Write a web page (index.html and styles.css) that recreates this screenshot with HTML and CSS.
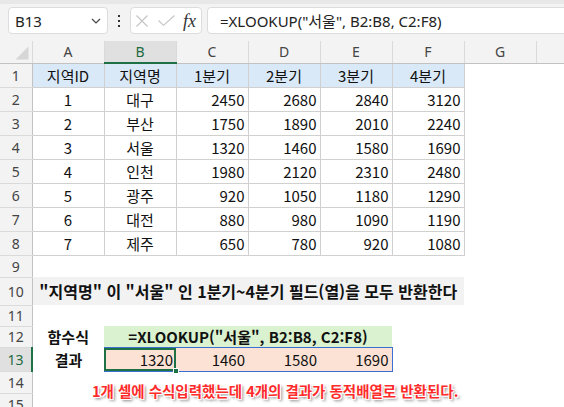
FILE: index.html
```html
<!DOCTYPE html>
<html lang="ko">
<head>
    <meta charset="UTF-8">
    <title>XLOOKUP 동적배열</title>
    <link rel="stylesheet" href="styles.css">
</head>
<body>
    <div class="toolbar">
        <div class="namebox">
            <span>B13</span>
            <svg width="10" height="6" viewBox="0 0 10 6"><path d="M1 1 L5 5 L9 1" fill="none" stroke="#444" stroke-width="1.2"/></svg>
        </div>
        <div class="dots"><i></i><i></i><i></i></div>
        <div class="fxbox">
            <svg class="ic-x" width="12" height="12" viewBox="0 0 12 12"><path d="M0.5 0.5 L11.5 11.5 M11.5 0.5 L0.5 11.5" stroke="#c4c4c4" stroke-width="1.1"/></svg>
            <svg class="ic-ok" width="17" height="11" viewBox="0 0 17 11"><path d="M0.5 5.5 L5.5 10.3 L16.5 0.5" fill="none" stroke="#c4c4c4" stroke-width="1.1"/></svg>
            <span class="fx">fx</span>
        </div>
        <div class="formula">=XLOOKUP("서울", B2:B8, C2:F8)</div>
    </div>

    <table class="sheet">
        <colgroup>
            <col class="col-rh">
            <col class="col"><col class="col"><col class="col"><col class="col"><col class="col"><col class="col"><col class="col">
            <col class="col-rest">
        </colgroup>
        <thead>
            <tr class="r-head">
                <th class="corner"><span class="tri"></span></th>
                <th>A</th><th class="cur">B</th><th>C</th><th>D</th><th>E</th><th>F</th><th>G</th><th></th>
            </tr>
        </thead>
        <tbody>
            <tr class="r24">
                <th>1</th>
                <td class="t hd">지역ID</td><td class="t hd">지역명</td><td class="t hd">1분기</td><td class="t hd">2분기</td><td class="t hd">3분기</td><td class="t hd">4분기</td><td></td><td></td>
            </tr>
            <tr class="r24">
                <th>2</th>
                <td class="t c">1</td><td class="t c">대구</td><td class="t n">2450</td><td class="t n">2680</td><td class="t n">2840</td><td class="t n">3120</td><td></td><td></td>
            </tr>
            <tr class="r24">
                <th>3</th>
                <td class="t c">2</td><td class="t c">부산</td><td class="t n">1750</td><td class="t n">1890</td><td class="t n">2010</td><td class="t n">2240</td><td></td><td></td>
            </tr>
            <tr class="r24">
                <th>4</th>
                <td class="t c">3</td><td class="t c">서울</td><td class="t n">1320</td><td class="t n">1460</td><td class="t n">1580</td><td class="t n">1690</td><td></td><td></td>
            </tr>
            <tr class="r24">
                <th>5</th>
                <td class="t c">4</td><td class="t c">인천</td><td class="t n">1980</td><td class="t n">2120</td><td class="t n">2310</td><td class="t n">2480</td><td></td><td></td>
            </tr>
            <tr class="r24">
                <th>6</th>
                <td class="t c">5</td><td class="t c">광주</td><td class="t n">920</td><td class="t n">1050</td><td class="t n">1180</td><td class="t n">1290</td><td></td><td></td>
            </tr>
            <tr class="r24">
                <th>7</th>
                <td class="t c">6</td><td class="t c">대전</td><td class="t n">880</td><td class="t n">980</td><td class="t n">1090</td><td class="t n">1190</td><td></td><td></td>
            </tr>
            <tr class="r24">
                <th>8</th>
                <td class="t c">7</td><td class="t c">제주</td><td class="t n">650</td><td class="t n">780</td><td class="t n">920</td><td class="t n">1080</td><td></td><td></td>
            </tr>
            <tr class="r9">
                <th>9</th>
                <td colspan="8"></td>
            </tr>
            <tr class="r10">
                <th>10</th>
                <td colspan="6" class="desc">"지역명" 이 "서울" 인 1분기~4분기 필드(열)을 모두 반환한다</td><td></td><td></td>
            </tr>
            <tr class="r11">
                <th>11</th>
                <td colspan="8"></td>
            </tr>
            <tr class="r12">
                <th>12</th>
                <td class="lbl">함수식</td><td colspan="4" class="fml">=XLOOKUP("서울", B2:B8, C2:F8)</td><td></td><td></td><td></td>
            </tr>
            <tr class="r13">
                <th class="cur">13</th>
                <td class="lbl">결과</td><td class="res sel">1320<span class="handle"></span></td><td class="res">1460</td><td class="res">1580</td><td class="res end">1690</td><td></td><td></td><td></td>
            </tr>
            <tr class="r14">
                <th>14</th>
                <td colspan="8"></td>
            </tr>
            <tr class="r15">
                <th>15</th>
                <td colspan="8"></td>
            </tr>
        </tbody>
    </table>

    <div class="note">1개 셀에 수식입력했는데 4개의 결과가 동적배열로 반환된다.</div>
</body>
</html>
```

FILE: styles.css
```css
* {
    box-sizing: border-box;
}
body {
    margin: 0;
    width: 564px;
    height: 407px;
    overflow: hidden;
    position: relative;
    background: #fff;
    color: #222;
    font-family: "Noto Sans CJK KR", "Noto Sans", sans-serif;
}

/* formula bar */
.toolbar {
    display: flex;
    align-items: flex-start;
    height: 41px;
    padding: 3px 0 0 8px;
    background: #f3f3f3;
    border-top: 4px solid #e8e8e8;
    overflow: hidden;
}
.namebox {
    flex: 0 0 100px;
    height: 27px;
    display: flex;
    align-items: center;
    justify-content: space-between;
    padding: 0 6px 0 6px;
    background: #fff;
    border: 1px solid #dcdcdc;
    border-radius: 4px;
    font-family: "Noto Sans", sans-serif;
    font-size: 15px;
}
.dots {
    flex: 0 0 22px;
    height: 27px;
    display: flex;
    flex-direction: column;
    align-items: center;
    justify-content: center;
    gap: 3px;
}
.dots i {
    width: 2px;
    height: 2px;
    background: #333;
}
.fxbox {
    flex: 0 0 72px;
    height: 27px;
    display: flex;
    align-items: center;
    padding-left: 5px;
    background: #fff;
    border: 1px solid #dcdcdc;
    border-radius: 4px;
}
.ic-ok {
    margin-left: 10px;
}
.fx {
    margin-left: 8px;
    font-family: "Liberation Serif", serif;
    font-style: italic;
    font-size: 18px;
    color: #333;
    line-height: 1;
}
.formula {
    flex: 0 0 400px;
    height: 27px;
    margin-left: 5px;
    padding-left: 12px;
    display: flex;
    align-items: center;
    background: #fff;
    border: 1px solid #dcdcdc;
    border-radius: 4px;
    font-family: "Noto Sans", "Noto Sans CJK KR", sans-serif;
    font-size: 15px;
    white-space: nowrap;
}

/* grid */
.sheet {
    border-collapse: collapse;
    table-layout: fixed;
    width: 564px;
}
.col-rh {
    width: 32px;
}
.col {
    width: 72px;
}
.col-rest {
    width: 28px;
}
.sheet th,
.sheet td {
    padding: 0;
    white-space: nowrap;
    overflow: visible;
}
.sheet th {
    background: #f3f3f3;
    color: #444;
    font-family: "Noto Sans", sans-serif;
    font-weight: normal;
    font-size: 14px;
    text-align: center;
}
thead th {
    border-right: 1px solid #dadada;
    border-bottom: 1px solid #c2c2c2;
}
tbody th {
    border-right: 1px solid #c2c2c2;
    border-bottom: 1px solid #dadada;
}
.sheet th.cur {
    background: #e0e0e0;
    color: #1e6b40;
}
thead th.cur {
    border-bottom: 2px solid #1e7145;
}
tbody th.cur {
    border-right: 2px solid #1e7145;
}
.corner {
    position: relative;
}
.tri {
    position: absolute;
    right: 3px;
    bottom: 3px;
    width: 13px;
    height: 13px;
    background: #d6d6d6;
    clip-path: polygon(100% 0, 100% 100%, 0 100%);
}

.r-head { height: 22px; }
.r24 { height: 24px; }
.r9 { height: 22px; }
.r10 { height: 28px; }
.r11 { height: 21px; }
.r12 { height: 21px; }
.r13 { height: 24px; }
.r14 { height: 22px; }
.r15 { height: 22px; }

.sheet td {
    font-size: 15px;
    color: #111;
}
.t {
    border: 1px solid #d0d0d0;
}
.hd {
    background: #dae9f8;
    text-align: center;
}
.c {
    text-align: center;
}
.n {
    text-align: right;
    padding-right: 3px !important;
}
.desc {
    background: #f2f2f2;
    text-align: center;
    font-weight: bold;
    font-size: 16px !important;
    color: #222;
}
.lbl {
    text-align: center;
    font-weight: bold;
}
.fml {
    background: #daf2d0;
    text-align: center;
    font-weight: bold;
}
.res {
    background: #fbe2d5;
    text-align: right;
    padding-right: 3px !important;
    border-top: 1px solid #3b6fd2;
    border-bottom: 1px solid #3b6fd2;
}
.res.end {
    border-right: 1px solid #3b6fd2;
}
.sel {
    position: relative;
    box-shadow: inset 0 0 0 2px #1e7145;
}
.handle {
    position: absolute;
    right: -3px;
    bottom: -3px;
    width: 6px;
    height: 6px;
    background: #1e7145;
    border: 1px solid #fff;
}

/* floating caption over the grid */
.note {
    position: absolute;
    left: 92px;
    top: 380px;
    font-size: 14.5px;
    font-weight: bold;
    color: #ff2b2b;
    white-space: nowrap;
    text-shadow: -1px -1px 0 #fff, 1px -1px 0 #fff, -1px 1px 0 #fff, 1px 1px 0 #fff,
        2px 2px 3px rgba(0, 0, 0, 0.55);
}
```
